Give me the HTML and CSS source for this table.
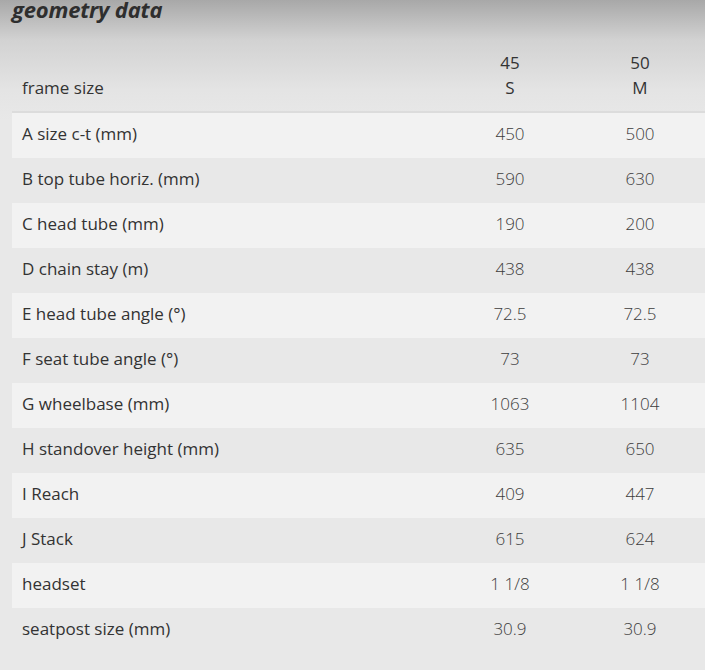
FILE: index.html
```html
<!DOCTYPE html>
<html>
<head>
<meta charset="utf-8">
<link rel="stylesheet" href="styles.css">
</head>
<body>
<div class="page">
  <h2 class="title">geometry data</h2>
  <table class="geo">
    <thead>
      <tr>
        <th class="label">frame size</th>
        <th class="size">45<br>S</th>
        <th class="size">50<br>M</th>
        <th class="rest"></th>
      </tr>
    </thead>
    <tbody>
      <tr><td class="label">A size c-t (mm)</td><td>450</td><td>500</td><td></td></tr>
      <tr><td class="label">B top tube horiz. (mm)</td><td>590</td><td>630</td><td></td></tr>
      <tr><td class="label">C head tube (mm)</td><td>190</td><td>200</td><td></td></tr>
      <tr><td class="label">D chain stay (m)</td><td>438</td><td>438</td><td></td></tr>
      <tr><td class="label">E head tube angle (°)</td><td>72.5</td><td>72.5</td><td></td></tr>
      <tr><td class="label">F seat tube angle (°)</td><td>73</td><td>73</td><td></td></tr>
      <tr><td class="label">G wheelbase (mm)</td><td>1063</td><td>1104</td><td></td></tr>
      <tr><td class="label">H standover height (mm)</td><td>635</td><td>650</td><td></td></tr>
      <tr><td class="label">I Reach</td><td>409</td><td>447</td><td></td></tr>
      <tr><td class="label">J Stack</td><td>615</td><td>624</td><td></td></tr>
      <tr><td class="label">headset</td><td>1 1/8</td><td>1 1/8</td><td></td></tr>
      <tr><td class="label">seatpost size (mm)</td><td>30.9</td><td>30.9</td><td></td></tr>
    </tbody>
  </table>
</div>
</body>
</html>
```
FILE: styles.css
```css
html, body {
  margin: 0;
  padding: 0;
}
body {
  background: #e8e8e8;
  font-family: "Open Sans", "Noto Sans", sans-serif;
  color: #333;
  min-height: 670px;
}
.page {
  background: linear-gradient(to bottom, #a8a8a8 0px, #d2d2d2 40px, #e4e4e4 90px, #e8e8e8 120px, #e8e8e8 100%);
  padding: 0 0 17px 12px;
  overflow: hidden;
}
.title {
  margin: -5px 0 0 0;
  font-size: 22px;
  line-height: 28px;
  font-style: italic;
  font-weight: 700;
  color: #2e2e2e;
  letter-spacing: -0.2px;
}
.geo {
  width: 100%;
  border-collapse: collapse;
  margin-top: 27px;
  font-size: 17px;
}
.geo th {
  font-weight: 400;
  color: #333;
  vertical-align: bottom;
  line-height: 25px;
  padding: 0 0 11px 0;
  border-bottom: 2px solid #dcdcdc;
}
.geo th.label {
  text-align: left;
  padding-left: 10px;
}
.geo th.size {
  width: 130px;
  text-align: center;
}
.geo td {
  height: 41px;
  padding: 0 0 4px 0;
  text-align: center;
  font-weight: 300;
  color: #3c3c3c;
}
.geo td.label {
  text-align: left;
  padding-left: 10px;
  font-weight: 400;
  color: #333;
}
.geo tbody tr:nth-child(odd) {
  background: #f2f2f2;
}
.geo tbody tr:nth-child(even) {
  background: #e8e8e8;
}
.geo .rest {
  width: 0;
}
```
